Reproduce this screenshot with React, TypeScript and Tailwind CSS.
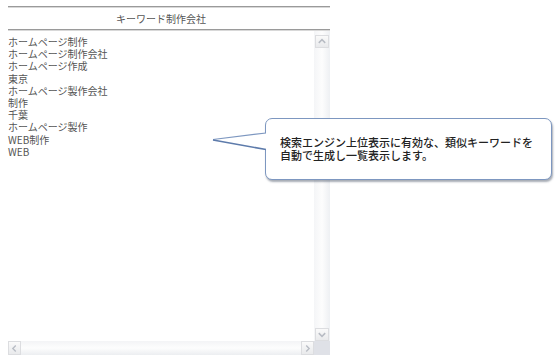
import React from 'react';

const keywords = [
  'ホームページ制作',
  'ホームページ制作会社',
  'ホームページ作成',
  '東京',
  'ホームページ製作会社',
  '制作',
  '千葉',
  'ホームページ製作',
  'WEB制作',
  'WEB',
];

const font = { fontFamily: '"MS PGothic", "Noto Sans CJK JP", sans-serif' };

const Arrow = ({ dir }: { dir: 'up' | 'down' | 'left' | 'right' }) => {
  const paths: Record<string, string> = {
    up: 'M3 8 L6.5 4.5 L10 8',
    down: 'M3 5 L6.5 8.5 L10 5',
    left: 'M8 3 L4.5 6.5 L8 10',
    right: 'M5 3 L8.5 6.5 L5 10',
  };
  return (
    <svg width="13" height="13" viewBox="0 0 13 13">
      <path d={paths[dir]} fill="none" stroke="#b8bcc4" strokeWidth="1.6" />
    </svg>
  );
};

const ScrollButton = ({ dir, className }: { dir: 'up' | 'down' | 'left' | 'right'; className?: string }) => (
  <div
    className={`flex items-center justify-center border border-[#dcdde0] bg-gradient-to-b from-[#fafafa] to-[#e9eaec] ${className ?? ''}`}
  >
    <Arrow dir={dir} />
  </div>
);

export default function App() {
  return (
    <div className="relative w-[558px] h-[364px] bg-white overflow-hidden" style={font}>
      <div className="ml-[8px] w-[322px] flex flex-col">
        {/* header */}
        <div className="mt-[6px] h-[2px] border-t border-[#9a9a9a] border-b-0 bg-[#d8d8d8]" />
        <div className="h-[21px] pr-[16px] flex items-center justify-center text-[10px] text-[#555]">
          キーワード制作会社
        </div>
        <div className="h-[2px] border-t border-[#9a9a9a] bg-[#d8d8d8]" />

        {/* list area */}
        <div className="flex h-[310px]">
          <div className="w-[306px] pt-[5px] text-[10px] leading-[12.2px] text-[#555]">
            {keywords.map((k) => (
              <div key={k + Math.random()}>{k}</div>
            ))}
          </div>
          <div className="w-[16px] flex flex-col pt-[4px] bg-gradient-to-r from-[#f4f5f7] via-[#fdfdfd] to-[#eef0f3]">
            <ScrollButton dir="up" className="w-[14px] h-[13px] mx-auto" />
            <div className="flex-1" />
            <ScrollButton dir="down" className="w-[14px] h-[13px] mx-auto" />
          </div>
        </div>

        {/* horizontal scrollbar */}
        <div className="flex h-[14px]">
          <div className="w-[306px] flex bg-gradient-to-b from-[#f3f4f6] via-[#fdfdfd] to-[#eceef1]">
            <ScrollButton dir="left" className="w-[13px] h-[14px]" />
            <div className="flex-1" />
            <ScrollButton dir="right" className="w-[13px] h-[14px]" />
          </div>
          <div className="w-[16px] bg-[#dfe1e7]" />
        </div>
      </div>

      {/* balloon */}
      <div className="absolute left-[265px] top-[118px] w-[287px] h-[62px] rounded-[7px] border border-[#7d97c0] bg-white shadow-[1px_2px_2px_rgba(60,70,90,0.45)]">
        <svg className="absolute left-[-54px] top-[11px]" width="56" height="24" viewBox="0 0 56 24">
          <polygon points="1,10 54,3 56,3 56,20 54,20" fill="white" />
          <polyline points="54,3 1,9.5" fill="none" stroke="#7d97c0" strokeWidth="1.2" />
          <polyline points="1,10 54,19.5" fill="none" stroke="#5d7bab" strokeWidth="1.6" />
        </svg>
        <div className="pl-[14px] pt-[17px] text-[11px] leading-[13px] text-[#222] font-medium">
          <div>検索エンジン上位表示に有効な、類似キーワードを</div>
          <div>自動で生成し一覧表示します。</div>
        </div>
      </div>
    </div>
  );
}
